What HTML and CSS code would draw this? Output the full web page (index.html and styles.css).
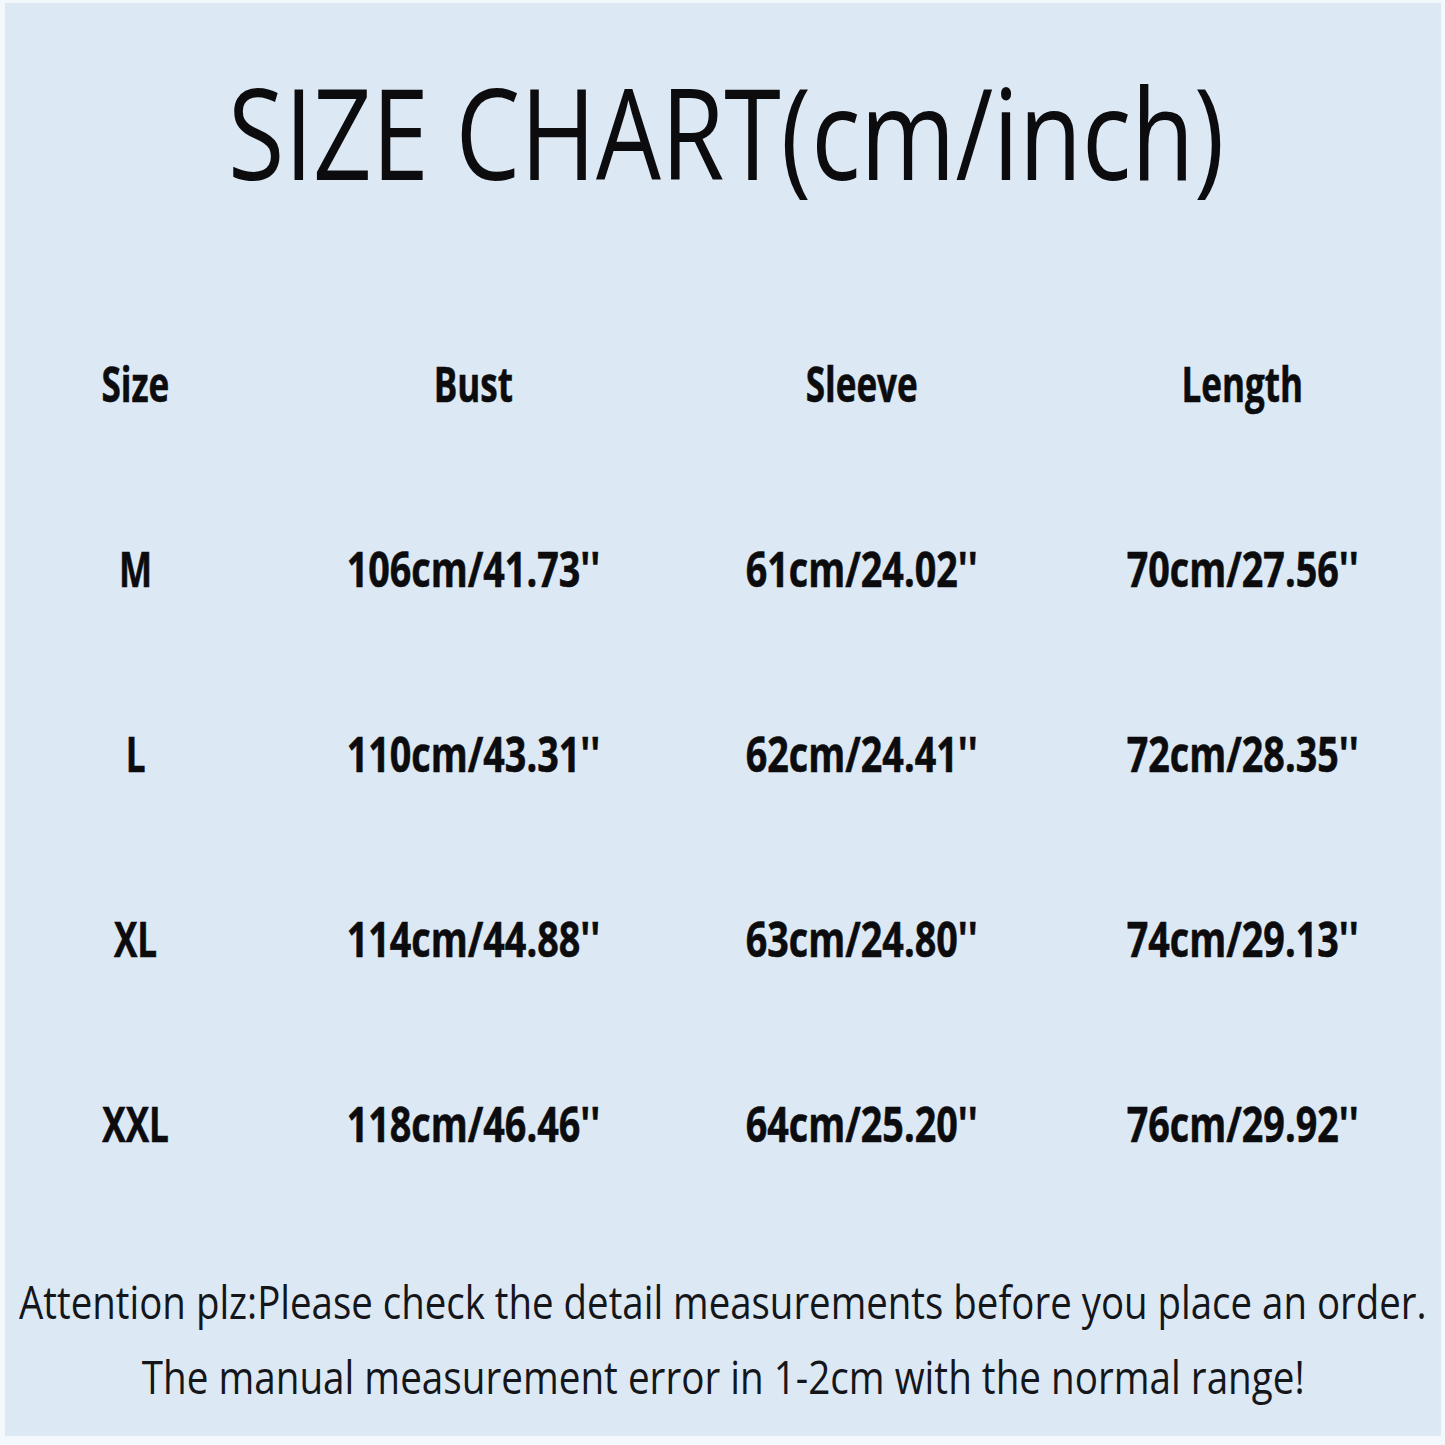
FILE: index.html
```html
<!DOCTYPE html>
<html lang="en">
<head>
<meta charset="utf-8">
<title>Size Chart</title>
<link rel="stylesheet" href="styles.css">
</head>
<body>
<div class="sheet">
  <h1 class="title"><span class="t">SIZE CHART(cm/inch)</span></h1>
  <div class="chart">
    <div class="cell head"><span class="t">Size</span></div>
    <div class="cell head"><span class="t">Bust</span></div>
    <div class="cell head"><span class="t">Sleeve</span></div>
    <div class="cell head"><span class="t">Length</span></div>

    <div class="cell size"><span class="t">M</span></div>
    <div class="cell"><span class="t">106cm/41.73''</span></div>
    <div class="cell"><span class="t">61cm/24.02''</span></div>
    <div class="cell"><span class="t">70cm/27.56''</span></div>

    <div class="cell size"><span class="t">L</span></div>
    <div class="cell"><span class="t">110cm/43.31''</span></div>
    <div class="cell"><span class="t">62cm/24.41''</span></div>
    <div class="cell"><span class="t">72cm/28.35''</span></div>

    <div class="cell size"><span class="t">XL</span></div>
    <div class="cell"><span class="t">114cm/44.88''</span></div>
    <div class="cell"><span class="t">63cm/24.80''</span></div>
    <div class="cell"><span class="t">74cm/29.13''</span></div>

    <div class="cell size"><span class="t">XXL</span></div>
    <div class="cell"><span class="t">118cm/46.46''</span></div>
    <div class="cell"><span class="t">64cm/25.20''</span></div>
    <div class="cell"><span class="t">76cm/29.92''</span></div>
  </div>
  <div class="note">
    <p class="line first"><span class="t">Attention plz:Please check the detail measurements before you place an order.</span></p>
    <p class="line second"><span class="t">The manual measurement error in 1-2cm with the normal range!</span></p>
  </div>
</div>
</body>
</html>
```

FILE: styles.css
```css
html, body {
  margin: 0;
  padding: 0;
}
body {
  background: #f3f8fc;
  width: 1445px;
  height: 1445px;
  overflow: hidden;
  color: #0c0c0e;
}
.sheet {
  margin: 3px 4px 0 5px;
  height: 1433px;
  background: #dce9f5;
  display: flex;
  flex-direction: column;
  align-items: stretch;
}
.t {
  display: inline-block;
  white-space: nowrap;
  transform-origin: center center;
}
.title {
  margin: 53px 0 0 0;
  height: 150px;
  line-height: 150px;
  font-family: "Open Sans", sans-serif;
  font-weight: 400;
  font-size: 126px;
  display: flex;
  justify-content: center;
}
.title .t {
  transform: translateX(3px) scaleX(0.815);
}
.chart {
  margin-top: 85px;
  display: grid;
  grid-template-columns: 261px 414px 364px 397px;
  grid-auto-rows: 185px;
}
.cell {
  line-height: 185px;
  display: flex;
  justify-content: center;
  font-family: "Open Sans", sans-serif;
  font-weight: 700;
  font-size: 48px;
}
.cell .t {
  transform: scaleX(0.785);
  -webkit-text-stroke: 0.6px #0c0c0e;
}
.head .t, .size .t {
  transform: scaleX(0.73);
}
.note {
  margin-top: 48px;
}
.line {
  margin: 0;
  height: 75px;
  line-height: 75px;
  display: flex;
  justify-content: center;
  font-family: "Open Sans", sans-serif;
  font-weight: 400;
  font-size: 46px;
  color: #15161a;
}
.first .t {
  transform: scaleX(0.835);
}
.second .t {
  transform: scaleX(0.84);
}
```
